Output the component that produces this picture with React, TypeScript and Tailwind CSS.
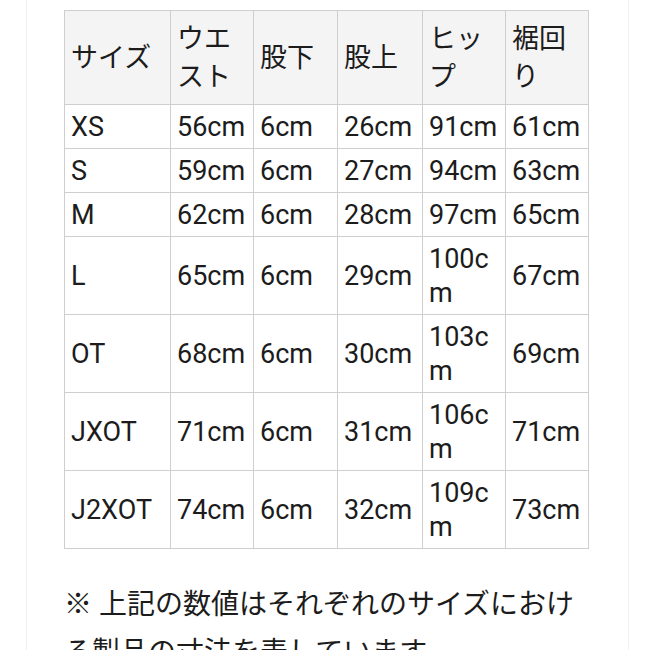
const header = ["サイズ", "ウエスト", "股下", "股上", "ヒップ", "裾回り"]

const rows: Array<[string, string, string, string, string, string]> = [
  ["XS", "56cm", "6cm", "26cm", "91cm", "61cm"],
  ["S", "59cm", "6cm", "27cm", "94cm", "63cm"],
  ["M", "62cm", "6cm", "28cm", "97cm", "65cm"],
  ["L", "65cm", "6cm", "29cm", "100cm", "67cm"],
  ["OT", "68cm", "6cm", "30cm", "103cm", "69cm"],
  ["JXOT", "71cm", "6cm", "31cm", "106cm", "71cm"],
  ["J2XOT", "74cm", "6cm", "32cm", "109cm", "73cm"],
]

const widths = ["w-[106px]", "w-[83px]", "w-[84px]", "w-[85px]", "w-[83px]", "w-[83px]"]

export default function App() {
  return (
    <div
      className="h-[650px] w-[650px] overflow-hidden bg-white text-[#1c1c1c]"
      style={{ fontFamily: 'Roboto, "Noto Sans CJK JP", sans-serif' }}
    >
      <div className="ml-[26px] h-full w-[603px] border-x border-[#f1f1f1] pl-[37px] pt-[10px]">
        <table className="w-[525px] table-fixed border-collapse text-[27px]">
          <colgroup>
            {widths.map((w, i) => (
              <col key={i} className={w} />
            ))}
          </colgroup>
          <thead>
            <tr className="h-[94px] bg-[#f4f4f4]">
              {header.map((h) => (
                <th
                  key={h}
                  className="border border-[#cfcfcf] px-[6px] text-left align-middle font-normal leading-[38px] break-all"
                >
                  {h}
                </th>
              ))}
            </tr>
          </thead>
          <tbody>
            {rows.map((r) => (
              <tr key={r[0]}>
                {r.map((c, i) => (
                  <td
                    key={i}
                    className="border border-[#cfcfcf] px-[6px] py-[4.5px] align-middle leading-[34px] break-all"
                  >
                    {c}
                  </td>
                ))}
              </tr>
            ))}
          </tbody>
        </table>
        <p className="mt-[32px] w-[530px] text-[28px] leading-[48px]">
          ※ 上記の数値はそれぞれのサイズにおける製品の寸法を表しています。
        </p>
      </div>
    </div>
  )
}
